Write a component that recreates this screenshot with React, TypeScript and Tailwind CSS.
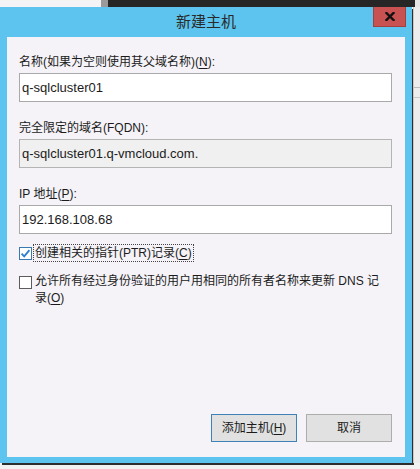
import React from "react";

const font = "font-['Liberation_Sans','Noto_Sans_CJK_SC',sans-serif]";

const Field = ({ label, mnemonic, value, readOnly }: { label: string; mnemonic?: string; value: string; readOnly?: boolean }) => (
  <div className="flex flex-col mb-[18px]">
    <div className="text-[12px] leading-[16px] text-[#1b1b1b]">
      {label}
      {mnemonic && (
        <>
          (<u className="underline-offset-2">{mnemonic}</u>)
        </>
      )}
      :
    </div>
    <div
      className={`mt-[3px] h-[29px] border flex items-center px-[2px] text-[13px] text-[#1b1b1b] ${
        readOnly ? "bg-[#f0f0f0] border-[#b4b4b4]" : "bg-white border-[#a9a9a9]"
      }`}
    >
      {value}
    </div>
  </div>
);

const Checkbox = ({ checked }: { checked?: boolean }) => (
  <svg width="13" height="13" viewBox="0 0 13 13" className="shrink-0">
    <rect x="0.5" y="0.5" width="12" height="12" fill="#ffffff" stroke={checked ? "#3a78b0" : "#5c5c5c"} />
    {checked && <path d="M2.6 6.6 L5.2 9.3 L10.4 3.2" fill="none" stroke="#2a7fd0" strokeWidth="1.8" />}
  </svg>
);

export default function App() {
  return (
    <div className={`w-[420px] h-[469px] overflow-hidden bg-[#f2f2f2] ${font}`}>
      {/* background windows peeking at the top */}
      <div className="flex h-[7px]">
        <div className="w-[101px] bg-[#f4f3f6]" />
        <div className="w-[7px] bg-[#9a9a9a]" />
        <div className="w-[307px] bg-[#262626]" />
        <div className="flex-1 bg-[#e6e6e6]" />
      </div>

      <div className="flex">
        <div className="w-[412px] h-[456px] bg-[#5cc4ee] shadow-[2px_2px_0_#2e2e2e] flex flex-col">
          {/* title bar */}
          <div className="relative h-[30px] flex items-center justify-center">
            <span className="text-[15px] text-[#2a2a2a]">新建主机</span>
            <div className="absolute right-[6px] top-0 w-[33px] h-[20px] bg-[#c85252] border border-t-0 border-[#a23f3f] flex items-center justify-center">
              <svg width="10" height="9" viewBox="0 0 10 9">
                <path d="M1.5 1 L8.5 8 M8.5 1 L1.5 8" stroke="#111" strokeWidth="2.4" strokeLinecap="square" />
              </svg>
            </div>
          </div>

          {/* body */}
          <div className="mx-[7px] h-[420px] bg-[#f5f3f8] flex flex-col pl-[12px] pr-[13px] pt-[17px] pb-[15px]">
            <Field label="名称(如果为空则使用其父域名称)" mnemonic="N" value="q-sqlcluster01" />
            <Field label="完全限定的域名(FQDN)" value="q-sqlcluster01.q-vmcloud.com." readOnly />
            <Field label="IP 地址" mnemonic="P" value="192.168.108.68" />

            <div className="-mt-[8px] flex items-center h-[18px]">
              <Checkbox checked />
              <span className="ml-[1px] border border-dotted border-[#444] px-[1px] text-[12px] leading-[16px] text-[#1b1b1b]">
                创建相关的指针(PTR)记录(<u className="underline-offset-2">C</u>)
              </span>
            </div>

            <div className="mt-[11px] flex items-start">
              <div className="mt-[3px]">
                <Checkbox />
              </div>
              <span className="pl-[3px] text-[12px] leading-[17px] text-[#1b1b1b]">
                允许所有经过身份验证的用户用相同的所有者名称来更新 DNS 记
                <br />
                录(<u className="underline-offset-2">O</u>)
              </span>
            </div>

            <div className="mt-auto flex justify-end gap-[9px]">
              <button className="w-[86px] h-[28px] bg-[#e1e1e1] border border-[#3f82b8] text-[12px] text-[#1b1b1b]">
                添加主机(<u className="underline-offset-2">H</u>)
              </button>
              <button className="w-[86px] h-[28px] bg-[#e1e1e1] border border-[#adadad] text-[12px] text-[#1b1b1b]">
                取消
              </button>
            </div>
          </div>
        </div>

        <div className="flex-1 h-[456px] ml-[1px] border-l border-[#c8c8c8] bg-[#ededed] flex flex-col">
          <div className="h-[80px]" />
          <div className="h-[1px] bg-[#bdbdbd]" />
          <div className="h-[9px]" />
          <div className="h-[1px] bg-[#c9c9c9]" />
        </div>
      </div>
    </div>
  );
}
